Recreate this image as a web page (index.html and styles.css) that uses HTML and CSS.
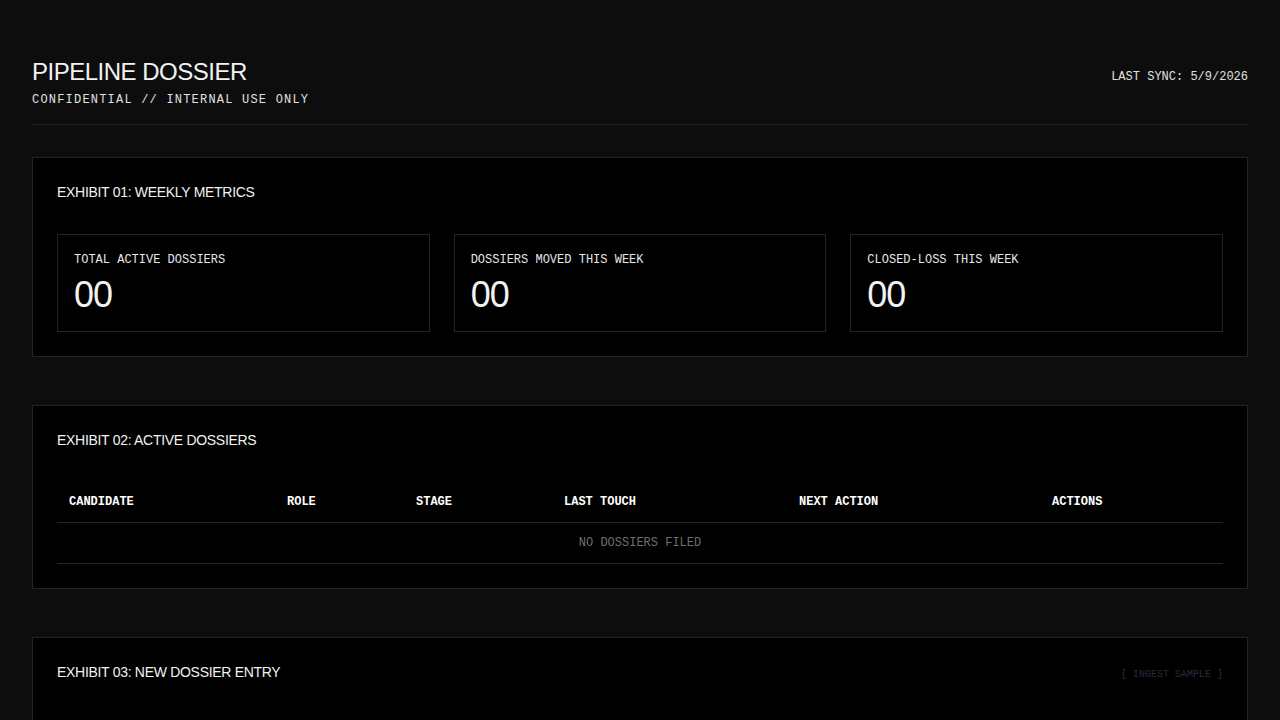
FILE: index.html
```html
<!DOCTYPE html>
<html lang="en">
<head>
  <meta charset="UTF-8">
  <title>Pipeline Dossier</title>
  <link rel="stylesheet" href="styles.css">
</head>
<body>
  <div class="page">
    <header class="masthead">
      <div class="masthead-title">
        <h1>PIPELINE DOSSIER</h1>
        <div class="classification">CONFIDENTIAL // INTERNAL USE ONLY</div>
      </div>
      <div class="sync" id="last-sync">LAST SYNC: 5/9/2026</div>
    </header>

    <section class="exhibit">
      <h2 class="exhibit-title">EXHIBIT 01: WEEKLY METRICS</h2>
      <div class="metrics">
        <div class="metric">
          <div class="metric-label">TOTAL ACTIVE DOSSIERS</div>
          <div class="metric-value" id="total-active">00</div>
        </div>
        <div class="metric">
          <div class="metric-label">DOSSIERS MOVED THIS WEEK</div>
          <div class="metric-value" id="moved-week">00</div>
        </div>
        <div class="metric">
          <div class="metric-label">CLOSED-LOSS THIS WEEK</div>
          <div class="metric-value" id="closed-loss">00</div>
        </div>
      </div>
    </section>

    <section class="exhibit">
      <h2 class="exhibit-title">EXHIBIT 02: ACTIVE DOSSIERS</h2>
      <table class="dossiers">
        <colgroup>
          <col class="col-candidate">
          <col class="col-role">
          <col class="col-stage">
          <col class="col-touch">
          <col class="col-next">
          <col class="col-actions">
        </colgroup>
        <thead>
          <tr>
            <th>CANDIDATE</th>
            <th>ROLE</th>
            <th>STAGE</th>
            <th>LAST TOUCH</th>
            <th>NEXT ACTION</th>
            <th>ACTIONS</th>
          </tr>
        </thead>
        <tbody id="dossier-rows">
          <tr>
            <td class="empty" colspan="6">NO DOSSIERS FILED</td>
          </tr>
        </tbody>
      </table>
    </section>

    <section class="exhibit exhibit-entry">
      <div class="exhibit-head">
        <h2 class="exhibit-title">EXHIBIT 03: NEW DOSSIER ENTRY</h2>
        <button class="ingest" type="button">[ INGEST SAMPLE ]</button>
      </div>
    </section>
  </div>
</body>
</html>
```

FILE: styles.css
```css
body {
  margin: 0;
  background: #0d0d0d;
  color: #f2f2f2;
  font-family: "Liberation Sans", Arial, sans-serif;
}

.page {
  padding: 58px 32px 48px;
}

.masthead {
  display: flex;
  justify-content: space-between;
  align-items: baseline;
  padding-bottom: 15px;
  border-bottom: 1px solid #23232b;
  margin-bottom: 32px;
}

h1 {
  margin: 0;
  font-size: 24px;
  font-weight: normal;
  line-height: 1.2;
  letter-spacing: -0.5px;
}

.classification {
  margin-top: 4px;
  font-family: "Liberation Mono", monospace;
  font-size: 12px;
  line-height: 18px;
  letter-spacing: 1.2px;
  color: #e0e0e0;
}

.sync {
  font-family: "Liberation Mono", monospace;
  font-size: 12px;
  color: #e0e0e0;
}

.exhibit {
  background: #000;
  border: 1px solid #23232b;
  padding: 24px;
  margin-bottom: 48px;
}

.exhibit-title {
  margin: 0 0 32px;
  font-size: 14px;
  font-weight: normal;
  line-height: 20px;
  letter-spacing: -0.3px;
}

.exhibit-head {
  display: flex;
  justify-content: space-between;
  align-items: baseline;
}

.exhibit-head .exhibit-title {
  margin-bottom: 0;
}

.exhibit-entry {
  min-height: 200px;
}

.metrics {
  display: grid;
  grid-template-columns: repeat(3, 1fr);
  gap: 24px;
}

.metric {
  border: 1px solid #23232b;
  padding: 18px 16px 16px;
}

.metric-label {
  font-family: "Liberation Mono", monospace;
  font-size: 12px;
  line-height: 14px;
  color: #e6e6e6;
}

.metric-value {
  margin-top: 8px;
  font-size: 36px;
  line-height: 40px;
  letter-spacing: -1px;
}

.dossiers {
  width: 100%;
  border-collapse: collapse;
  table-layout: fixed;
  font-family: "Liberation Mono", monospace;
  font-size: 12px;
}

.col-candidate { width: 218px; }
.col-role { width: 129px; }
.col-stage { width: 148px; }
.col-touch { width: 235px; }
.col-next { width: 253px; }
.col-actions { width: 183px; }

.dossiers th {
  text-align: left;
  font-weight: bold;
  line-height: 16px;
  padding: 12px;
  border-bottom: 1px solid #23232b;
  color: #fff;
}

.dossiers td {
  line-height: 16px;
  padding: 12px;
  border-bottom: 1px solid #23232b;
}

.dossiers .empty {
  text-align: center;
  color: #6e6e6e;
}

.ingest {
  background: none;
  border: none;
  padding: 0;
  font-family: "Liberation Mono", monospace;
  font-size: 10px;
  color: #2c2c3e;
  cursor: pointer;
}
```
